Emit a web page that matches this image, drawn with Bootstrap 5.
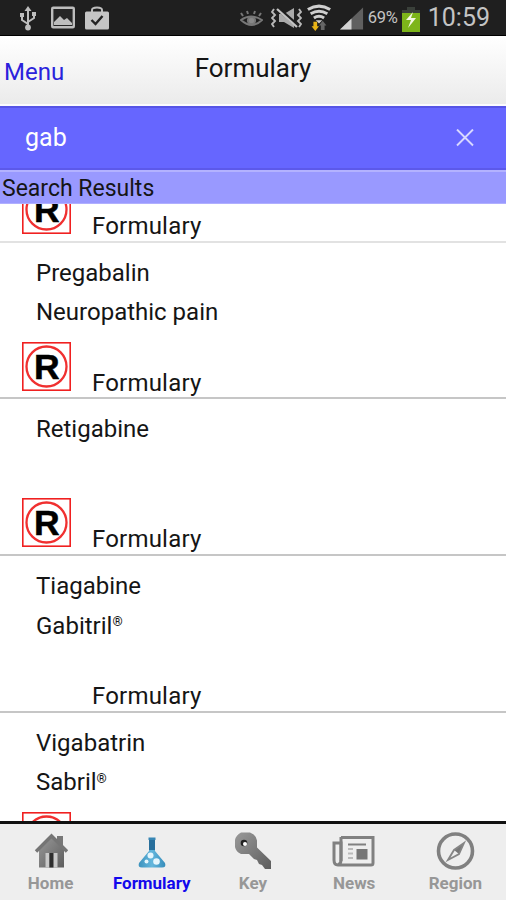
<!DOCTYPE html>
<html lang="en">
<head>
<meta charset="utf-8">
<meta name="viewport" content="width=device-width, initial-scale=1">
<title>Formulary</title>
<link href="https://cdn.jsdelivr.net/npm/bootstrap@5.3.0/dist/css/bootstrap.min.css" rel="stylesheet">
<style>
body{font-family:Roboto,"Liberation Sans",sans-serif;font-size:24px;line-height:28px;color:#151515;background:#fff}
.screen{width:506px;height:900px}
svg{display:block;flex:none}
.statusbar{height:36px;background:#1f1f1f;border-bottom:1px solid #000;color:#c4c4c4;padding:0 16px 0 19px}
.status-left{gap:10px}
.signal,.battery{margin-top:3px}
.pct{font-size:16.5px;letter-spacing:-.2px}
.clock{font-size:25px}
.titlebar{height:70px;background:linear-gradient(#fff,#ebebeb);border-bottom:2px solid #fbfbff;display:grid;grid-template-columns:1fr auto 1fr}
.menu-link{color:#2a22dc;padding:22px 0 0 4px}
.page-title{padding-top:18px;font-size:26px}
.searchbar{height:64px;background:#66f;border-top:2px solid #5654e6;border-bottom:2px solid #5c59ea;padding:0 32px 0 25px;color:#fff;font-size:25px}
.subhead{height:34px;background:#9999ff;border-top:2px solid #b3b2ff;border-bottom:1px solid #b0afff;padding:3px 0 0 2px;font-size:23px}
.results{height:617px}
.result-list{margin-top:-118px}
.drug{height:156.7px;border-bottom:2px solid #c6c6c6;padding:16px 0 0 22px}
.drug:first-child{border-color:#e2e2e2}
.names{height:83px;padding-left:14px}
.names div{height:39.5px}
.tile{width:49px;height:49px}
.kind{padding:27px 0 0 21px;letter-spacing:.2px}
.tabs{height:79px;background:#eee;border-top:3px solid #111}
.tab{color:#979797;font-weight:700;font-size:17px;line-height:20px;padding-top:6px;width:20%}
.tab.active{color:#1208ec}
.tab svg{margin-bottom:3px}
sup.reg{font-size:13px;top:-.55em;font-weight:500}
</style>
</head>
<body>
<svg width="0" height="0" class="position-absolute"><defs>
<linearGradient id="gm" x1="0" y1="0" x2="1" y2="1"><stop offset="0" stop-color="#999"/><stop offset="1" stop-color="#5d5d5d"/></linearGradient>
<linearGradient id="gb" x1="0" y1="0" x2="1" y2="0"><stop offset="0" stop-color="#3c92bd"/><stop offset=".5" stop-color="#64b7dd"/><stop offset="1" stop-color="#368cba"/></linearGradient>
<symbol id="rtile" viewBox="0 0 49 49"><rect x=".8" y=".8" width="47.4" height="47.4" fill="#fff" stroke="#f02020" stroke-width="1.600"/><circle cx="24.500" cy="24.500" r="20" fill="none" stroke="#f03030" stroke-width="2.300"/><text x="24.900" y="37" text-anchor="middle" font-family="Liberation Sans" font-weight="700" font-size="35.500" stroke="#000" stroke-width=".5">R</text></symbol>
</defs></svg>
<div class="screen d-flex flex-column overflow-hidden">
  <div class="statusbar d-flex align-items-center flex-shrink-0">
    <div class="status-left d-flex align-items-center">
    <svg width="18" height="26" viewBox="0 0 18 26" fill="none" stroke="#bdbdbd" stroke-width="2"><path d="M9 4v18M9 19L3 15v-4M9 17l6-4V9"/><path d="M9 1l3.500 5h-7z" fill="#bdbdbd" stroke="none"/><circle cx="9" cy="22.500" r="2.900" fill="#bdbdbd" stroke="none"/><path d="M1 8h4v4H1zM13 7h4v4h-4z" fill="#bdbdbd" stroke="none"/></svg>
    <svg class="ms-1" width="24" height="23" viewBox="0 0 24 23"><rect x="1.200" y="1.700" width="21.600" height="19.600" rx="1" fill="#252525" stroke="#bdbdbd" stroke-width="2.400"/><path d="M3 19v-3l6-6 4 4 3-2 5 5v2z" fill="#bdbdbd"/></svg>
    <svg width="24" height="24" viewBox="0 0 24 24"><path d="M7 7V4q0-2.500 5-2.500T17 4v3" fill="none" stroke="#bdbdbd" stroke-width="2"/><rect x="0" y="5.500" width="24" height="18" rx="1.500" fill="#c4c4c4"/><path d="M6.500 14l4 4 7-8" fill="none" stroke="#222" stroke-width="2.400"/></svg>
    </div>
    <div class="ms-auto d-flex align-items-center">
      <svg width="23" height="20" viewBox="0 0 23 20" fill="none" stroke="#777" stroke-width="2"><path d="M1 12q10-7 21 0-10 10-21 0zM3 8L1 5M8 6L7 3M14 6l1-3M19 8l2-3"/><circle cx="11.500" cy="12.500" r="3.600" fill="#888"/></svg>
      <svg class="ms-2" width="31" height="22" viewBox="0 0 31 22"><path d="M3 2L1 5l3 3-3 3 3 3-3 3 2 3M28 2l2 3-3 3 3 3-3 3 3 3-2 3" fill="none" stroke="#b9b9b9" stroke-width="1.900"/><path d="M8 7h5l10-6v20l-10-6H8z" fill="#aaa"/><path d="M5 0l22 19" stroke="#1f1f1f" stroke-width="4"/><path d="M6 2l20 18" stroke="#c4c4c4" stroke-width="2.300"/></svg>
      <svg class="ms-1" width="26" height="29" viewBox="0 0 28 29" fill="none" stroke="#cfcfcf" stroke-width="3.200"><path d="M2 6q12-7.500 24 0M5 10.500q9-5.500 18 0M8.500 15q5.500-3.600 11 0"/><path d="M10.500 17.500h7L14 21z" fill="#cfcfcf" stroke="none"/><path d="M8 19h4v5h2l-4 5-4-5h2z" fill="#e8b316" stroke="none"/><path d="M16 28v-5h-2l4-5 4 5h-2v5z" fill="#666" stroke="none"/></svg>
      <svg width="24" height="24" viewBox="0 0 25 24" class="signal ms-2"><path d="M0 23L24 0v23z" fill="#606060"/><path d="M0 23L12 11.500v11.500z" fill="#d2d2d2"/></svg>
      <span class="pct ms-1">69%</span>
      <svg class="battery ms-1" width="18" height="25" viewBox="0 0 18 25"><path d="M5 0h8v3h5v5H0V3h5z" fill="#3a403a"/><path d="M0 6h18v19H0z" fill="#7db51a"/><path d="M11 5l-7 8h5l-3 8 8-10H9z" fill="#f4f8e4"/></svg>
      <span class="clock ms-2">10:59</span>
    </div>
  </div>
  <header class="titlebar flex-shrink-0"><a class="menu-link text-decoration-none" href="#">Menu</a><div class="page-title">Formulary</div></header>
  <div class="searchbar d-flex align-items-center justify-content-between flex-shrink-0"><span>gab</span>
    <svg width="18" height="18" viewBox="0 0 18 18"><path d="M1 .5l16 16M17 .5L1 16.500" stroke="#d8d8ff" stroke-width="1.900"/></svg></div>
  <div class="subhead flex-shrink-0">Search Results</div>
  <main class="results overflow-hidden flex-shrink-0"><div class="result-list">
    <div class="drug"><div class="names"></div><div class="d-flex"><svg class="tile"><use href="#rtile"/></svg><div class="kind">Formulary</div></div></div>
    <div class="drug"><div class="names"><div>Pregabalin</div><div>Neuropathic pain</div></div><div class="d-flex"><svg class="tile"><use href="#rtile"/></svg><div class="kind">Formulary</div></div></div>
    <div class="drug"><div class="names"><div>Retigabine</div></div><div class="d-flex"><svg class="tile"><use href="#rtile"/></svg><div class="kind">Formulary</div></div></div>
    <div class="drug"><div class="names"><div>Tiagabine</div><div>Gabitril<sup class="reg">®</sup></div></div><div class="d-flex"><div class="tile"></div><div class="kind">Formulary</div></div></div>
    <div class="drug"><div class="names"><div>Vigabatrin</div><div>Sabril<sup class="reg">®</sup></div></div><div class="d-flex"><svg class="tile"><use href="#rtile"/></svg></div></div>
  </div></main>
  <nav class="tabs d-flex flex-shrink-0">
    <div class="tab d-flex flex-column align-items-center"><svg width="40" height="40" viewBox="0 0 40 40"><path d="M26 6h6v12h-6z" fill="#777"/><path d="M8 19L20 7l13 12v18.500H8z" fill="url(#gm)"/><path d="M5 21.500L20.500 6 36 21.500" fill="none" stroke="#757575" stroke-width="3.400"/><path d="M14.500 23h12v14.500h-12z" fill="#c9c9c9"/><path d="M18.300 23h4.200v14.500h-4.200z" fill="#2e2e2e"/></svg>Home</div>
    <div class="tab active d-flex flex-column align-items-center"><svg width="40" height="40" viewBox="0 0 40 40"><path d="M17 14h6v7l10 12q1.500 4.500-3 4.500H10q-4.500 0-3-4.500l10-12z" fill="url(#gb)"/><path d="M17 8h6v12h-6z" fill="#286f9c"/><path d="M16.500 7.500h7v2.500h-7z" fill="#3786b4"/><g fill="#e5f6fd"><circle cx="18.500" cy="25.500" r="3"/><circle cx="24.500" cy="31.500" r="3.300"/><circle cx="14.500" cy="31.500" r="2"/></g></svg>Formulary</div>
    <div class="tab d-flex flex-column align-items-center"><svg width="40" height="40" viewBox="0 0 40 40"><path fill-rule="evenodd" d="M8 2.500h9q6 2 7 8v7l14 13.500v8h-6l-3-4-3-1-2-4-3-1-5-5H8q-5-2-6-7v-7q1-5 6-7.500z" fill="url(#gm)"/><circle cx="11" cy="13" r="3.300" fill="#222"/><circle cx="12" cy="14" r="2" fill="#fff"/></svg>Key</div>
    <div class="tab d-flex flex-column align-items-center"><svg width="44" height="40" viewBox="0 0 44 40" fill="none" stroke="#808080" stroke-width="3"><path d="M9 7.500h32V33q0 2-2 2H6q-4 0-4-5V13h7v17q0 4-3 5"/><path d="M9 7v24" /><path d="M16 14.500h18" stroke-width="2"/><path d="M16 19h5M16 23.500h5M16 28h5" stroke="#bbb" stroke-width="2.200"/><path d="M24.500 19h11v10.500h-11z" fill="#777" stroke="none"/></svg>News</div>
    <div class="tab d-flex flex-column align-items-center"><svg width="42" height="40" viewBox="0 0 40 40"><circle cx="20.500" cy="21" r="17" fill="none" stroke="#808080" stroke-width="3.600"/><path d="M29 13l-5 11-5-4z" fill="#777"/><path d="M29 13l-10 7-6 10 11-6z" fill="none" stroke="#858585" stroke-width="1.800"/></svg>Region</div>
  </nav>
</div>
<script src="https://cdn.jsdelivr.net/npm/bootstrap@5.3.0/dist/js/bootstrap.bundle.min.js"></script>
</body>
</html>
